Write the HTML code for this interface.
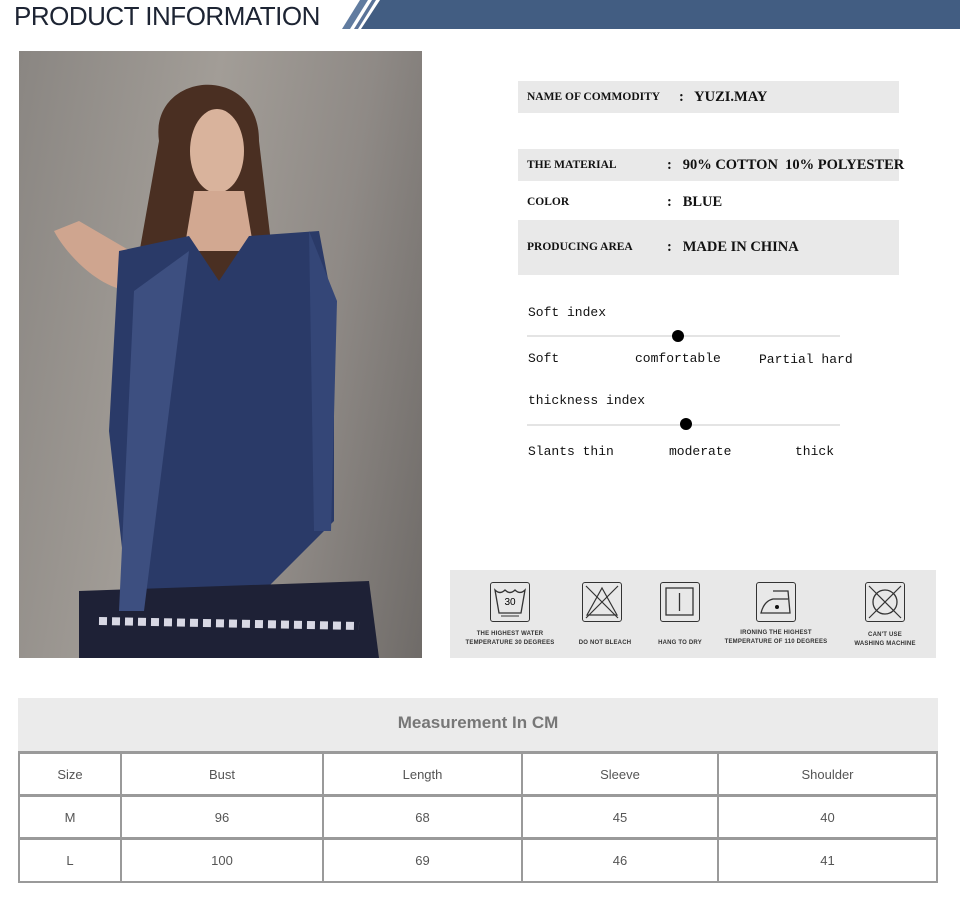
<!DOCTYPE html>
<html><head><meta charset="utf-8"><style>
*{margin:0;padding:0;box-sizing:border-box}
body{width:960px;height:918px;background:#fff;position:relative;overflow:hidden;font-family:"Liberation Sans",sans-serif}
.abs{position:absolute}
.ser{font-family:"Liberation Serif",serif;font-weight:bold;color:#111;white-space:nowrap}
.mono{font-family:"Liberation Mono",monospace;font-size:13px;color:#111;white-space:nowrap}
.g{background:#e9e9e9}
.lbl{font-size:11.5px}
.val{font-size:14.5px}
.cap{font-size:6px;color:#333;text-align:center;font-weight:bold;line-height:9px;letter-spacing:.2px}
.ic{position:absolute;width:40px;height:40px;border:1.5px solid #333;border-radius:3px}
table{position:absolute;left:18px;top:751px;width:920px;border-collapse:collapse}
td{border:2px solid #9a9a9a;border-top-width:3px;text-align:center;font-size:13px;color:#555;height:43px}
</style></head><body>
<div class="abs" style="left:14px;top:1px;font-size:26px;color:#1d2433;letter-spacing:-.5px">PRODUCT INFORMATION</div>
<svg class="abs" style="left:330px;top:0" width="630" height="29">
<polygon points="12,29 30,0 38,0 20,29" fill="#617ca0"/>
<polygon points="24,29 42,0 46,0 28,29" fill="#5a7398"/>
<polygon points="31,29 50,0 630,0 630,29" fill="#425d82"/>
</svg>
<div class="abs" style="left:19px;top:51px;width:403px;height:607px;overflow:hidden;background:linear-gradient(100deg,#8a8682,#a29d97 40%,#8f8a86 70%,#6f6b68)">
<svg width="403" height="607">
<path d="M140,90 C130,20 240,10 240,90 L260,260 L110,260 Z" fill="#4a2f22"/>
<ellipse cx="198" cy="100" rx="27" ry="42" fill="#d9b39c"/>
<path d="M175,140 L225,140 L235,200 L165,200Z" fill="#d2a891"/>
<path d="M35,180 C45,200 80,240 115,240 L120,205 L60,170Z" fill="#cfa58f"/>
<path d="M100,200 L170,185 L200,230 L230,185 L300,180 L315,260 L315,470 L230,555 L110,560 L90,380 Z" fill="#2a3a68"/>
<path d="M290,180 L318,250 L312,480 L295,480Z" fill="#344677"/>
<path d="M60,540 L350,530 L360,607 L60,607Z" fill="#1e2136"/>
<path d="M80,570 L340,575" stroke="#d8d8e4" stroke-width="8" stroke-dasharray="8 5"/>
<path d="M115,240 L170,200 L125,560 L100,560Z" fill="#3d4f80"/>
</svg></div>
<div class="abs g" style="left:518px;top:81px;width:381px;height:32px"></div>
<div class="abs ser lbl" style="left:527px;top:91px">NAME OF COMMODITY</div>
<div class="abs ser val" style="left:679px;top:89px">:&nbsp;&nbsp; YUZI.MAY</div>
<div class="abs g" style="left:518px;top:149px;width:381px;height:32px"></div>
<div class="abs ser lbl" style="left:527px;top:159px">THE MATERIAL</div>
<div class="abs ser val" style="left:667px;top:157px">:&nbsp;&nbsp; 90% COTTON&nbsp; 10% POLYESTER</div>
<div class="abs ser lbl" style="left:527px;top:196px">COLOR</div>
<div class="abs ser val" style="left:667px;top:194px">:&nbsp;&nbsp; BLUE</div>
<div class="abs g" style="left:518px;top:220px;width:381px;height:55px"></div>
<div class="abs ser lbl" style="left:527px;top:241px">PRODUCING AREA</div>
<div class="abs ser val" style="left:667px;top:239px">:&nbsp;&nbsp; MADE IN CHINA</div>
<div class="abs mono" style="left:528px;top:305px">Soft index</div>
<div class="abs" style="left:527px;top:335px;width:313px;height:2px;background:#e4e4e4"></div>
<div class="abs" style="left:672px;top:330px;width:12px;height:12px;border-radius:50%;background:#000"></div>
<div class="abs mono" style="left:528px;top:351px">Soft</div>
<div class="abs mono" style="left:635px;top:351px">comfortable</div>
<div class="abs mono" style="left:759px;top:352px">Partial hard</div>
<div class="abs mono" style="left:528px;top:393px">thickness index</div>
<div class="abs" style="left:527px;top:424px;width:313px;height:2px;background:#e4e4e4"></div>
<div class="abs" style="left:680px;top:418px;width:12px;height:12px;border-radius:50%;background:#000"></div>
<div class="abs mono" style="left:528px;top:444px">Slants thin</div>
<div class="abs mono" style="left:669px;top:444px">moderate</div>
<div class="abs mono" style="left:795px;top:444px">thick</div>
<div class="abs" style="left:450px;top:570px;width:486px;height:88px;background:#e8e8e8">
<div class="ic" style="left:40px;top:12px"><svg width="38" height="38"><path d="M4,7 Q9,12 14,7 Q19,12 24,7 Q29,12 34,7 L30,30 L8,30Z" fill="none" stroke="#333" stroke-width="1.3"/><text x="19" y="22" font-size="10" text-anchor="middle" font-family="Liberation Sans">30</text><line x1="10" y1="33" x2="28" y2="33" stroke="#333"/></svg></div>
<div class="ic" style="left:132px;top:12px"><svg width="38" height="38"><path d="M19,5 L34,32 L4,32Z M3,3 L35,35 M35,3 L3,35" fill="none" stroke="#333" stroke-width="1.2"/></svg></div>
<div class="ic" style="left:210px;top:12px"><svg width="38" height="38"><rect x="5" y="5" width="27" height="27" fill="none" stroke="#333" stroke-width="1.3"/><line x1="18.5" y1="10" x2="18.5" y2="28" stroke="#333" stroke-width="1.3"/></svg></div>
<div class="ic" style="left:306px;top:12px"><svg width="38" height="38"><path d="M16,8 L31,8 L33,30 L4,30 Q7,18 16,16 L31,16" fill="none" stroke="#333" stroke-width="1.3"/><circle cx="20" cy="24" r="2" fill="#111"/></svg></div>
<div class="ic" style="left:415px;top:12px"><svg width="38" height="38"><circle cx="19" cy="19" r="12" fill="none" stroke="#333" stroke-width="1.3"/><path d="M3,3 L35,35 M35,3 L3,35" stroke="#333" stroke-width="1.2"/></svg></div>
<div class="abs cap" style="left:10px;top:60px;width:100px">THE HIGHEST WATER<br>TEMPERATURE 30 DEGREES</div>
<div class="abs cap" style="left:115px;top:69px;width:80px">DO NOT BLEACH</div>
<div class="abs cap" style="left:195px;top:69px;width:70px">HANG TO DRY</div>
<div class="abs cap" style="left:268px;top:59px;width:116px">IRONING THE HIGHEST<br>TEMPERATURE OF 110 DEGREES</div>
<div class="abs cap" style="left:395px;top:61px;width:80px">CAN'T USE<br>WASHING MACHINE</div>
</div>
<div class="abs" style="left:18px;top:698px;width:920px;height:53px;background:#ebebeb;text-align:center;line-height:50px;font-size:17px;font-weight:bold;color:#777">Measurement In CM</div>
<table>
<colgroup><col style="width:102px"><col style="width:202px"><col style="width:199px"><col style="width:196px"><col></colgroup>
<tr><td>Size</td><td>Bust</td><td>Length</td><td>Sleeve</td><td>Shoulder</td></tr>
<tr><td>M</td><td>96</td><td>68</td><td>45</td><td>40</td></tr>
<tr><td>L</td><td>100</td><td>69</td><td>46</td><td>41</td></tr>
</table>
</body></html>
